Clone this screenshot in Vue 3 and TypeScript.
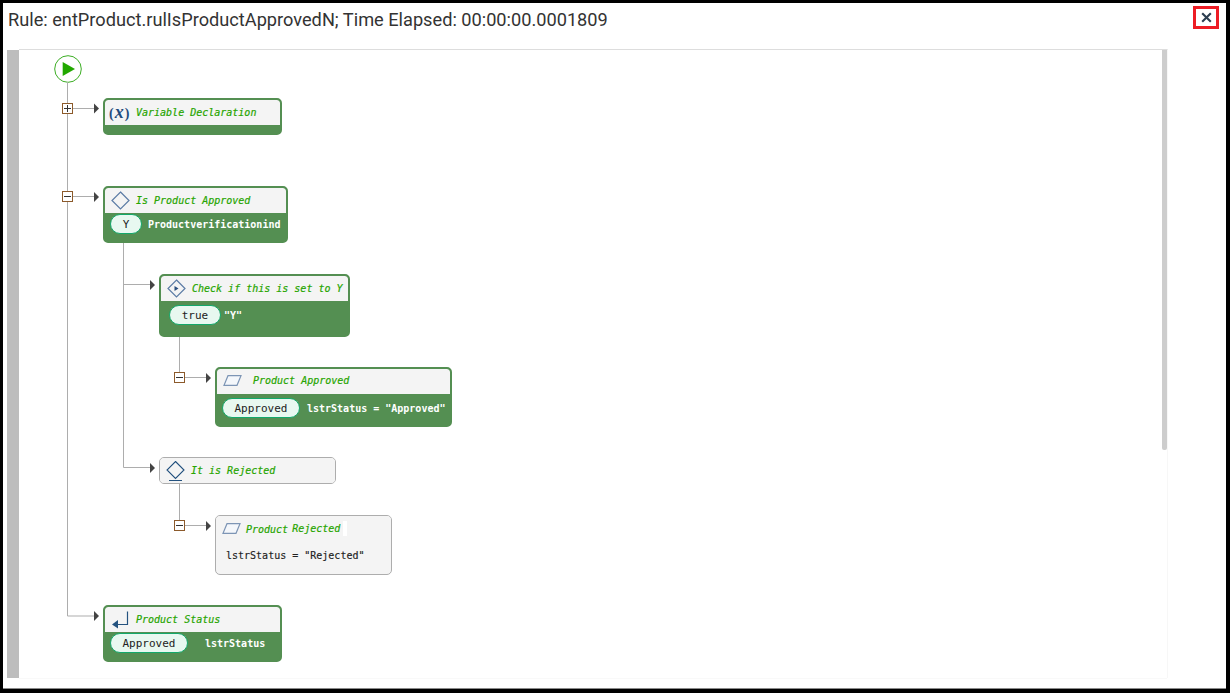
<script setup lang="ts">
type IconKind = 'variable' | 'diamond' | 'check' | 'assign' | 'rejected' | 'assignLight' | 'return'

interface FlowNode {
    id: string
    x: number
    y: number
    width: number
    height: number
    titleGap: number
    icon: IconKind
    title: string
    titleTail?: string
    titleLift?: number
    idle?: boolean
    pill?: string
    pillWidth?: number
    bodyLeft?: number
    bodyTop?: number
    bodyGap?: number
    expression?: string
}

// page coordinates of the diagram canvas
const originX = 19
const originY = 50

const nodes: FlowNode[] = [
    { id: 'vars', x: 103, y: 98, width: 179, height: 37, titleGap: 5, icon: 'variable', title: 'Variable Declaration' },
    { id: 'approved', x: 103, y: 186, width: 185, height: 57, titleGap: 6, icon: 'diamond', title: 'Is Product Approved', pill: 'Y', pillWidth: 32, bodyLeft: 5, bodyTop: 1, bodyGap: 6, expression: 'Productverificationind' },
    { id: 'check', x: 159, y: 274, width: 191, height: 63, titleGap: 6, icon: 'check', title: 'Check if this is set to Y', pill: 'true', pillWidth: 52, bodyLeft: 8, bodyTop: 4, bodyGap: 3, expression: '"Y"' },
    { id: 'assign', x: 215, y: 367, width: 237, height: 60, titleGap: 11, titleLift: 2, icon: 'assign', title: 'Product Approved', pill: 'Approved', pillWidth: 78, bodyLeft: 5, bodyTop: 4, bodyGap: 7, expression: 'lstrStatus = "Approved"' },
    { id: 'rejected', x: 159, y: 457, width: 177, height: 27, titleGap: 6, icon: 'rejected', title: 'It is Rejected', idle: true },
    { id: 'assignRejected', x: 215, y: 515, width: 177, height: 60, titleGap: 5, icon: 'assignLight', title: 'Product', titleTail: 'Rejected', idle: true, bodyLeft: 10, bodyTop: 4, expression: 'lstrStatus = "Rejected"' },
    { id: 'status', x: 103, y: 605, width: 179, height: 57, titleGap: 7, icon: 'return', title: 'Product Status', pill: 'Approved', pillWidth: 78, bodyLeft: 5, bodyTop: 1, bodyGap: 17, expression: 'lstrStatus' }
]

const lines = [
    'M67.5 82V616H94',
    'M73 108.5H94',
    'M73 196.5H94',
    'M123.5 243V467.5H150',
    'M123.5 284.5H150',
    'M179.5 337V377.5H206',
    'M179.5 484V525.5H206'
]

const arrows = [
    [94, 108.5],
    [94, 197],
    [150, 285],
    [206, 378],
    [150, 468],
    [206, 526],
    [94, 616]
]

const toggles = [
    { x: 62, y: 103, open: false },
    { x: 62, y: 191, open: true },
    { x: 174, y: 372, open: true },
    { x: 174, y: 520, open: true }
]

function nodeStyle(node: FlowNode) {
    return {
        left: `${node.x - originX}px`,
        top: `${node.y - originY}px`,
        width: `${node.width}px`,
        height: `${node.height}px`
    }
}
</script>

<template>
    <div class="dialog">
        <div class="dialog-head">
            <span class="dialog-title">Rule: entProduct.rulIsProductApprovedN; Time Elapsed: 00:00:00.0001809</span>
            <button class="close-btn" type="button" aria-label="Close">
                <svg width="11" height="11" viewBox="0 0 11 11">
                    <path d="M1.2 1.2 9.8 9.8M9.8 1.2 1.2 9.8" stroke="#2c3e50" stroke-width="2.1" fill="none" />
                </svg>
            </button>
        </div>

        <div class="viewer">
            <div class="gutter"></div>
            <div class="canvas">
                <svg class="wires" width="1142" height="628" :viewBox="`${originX} ${originY} 1142 628`">
                    <circle cx="68" cy="69" r="13.3" fill="#fff" stroke="#3cae24" stroke-width="1" />
                    <path d="M62.7 62 75 69 62.7 76Z" fill="#22a800" />
                    <path v-for="line in lines" :key="line" :d="line" fill="none" stroke="#adadad" stroke-width="1" />
                    <path
                        v-for="arrow in arrows"
                        :key="arrow.join()"
                        :d="`M${arrow[0]} ${arrow[1] - 5}L${arrow[0] + 5} ${arrow[1]}L${arrow[0]} ${arrow[1] + 5}Z`"
                        fill="#444"
                    />
                    <g v-for="toggle in toggles" :key="toggle.y">
                        <rect :x="toggle.x + 0.5" :y="toggle.y + 0.5" width="10" height="10" fill="#fff" stroke="#8c5a2b" />
                        <path :d="`M${toggle.x + 2} ${toggle.y + 5.5}H${toggle.x + 9}`" stroke="#333" />
                        <path v-if="!toggle.open" :d="`M${toggle.x + 5.5} ${toggle.y + 2}V${toggle.y + 9}`" stroke="#333" />
                    </g>
                </svg>

                <div
                    v-for="node in nodes"
                    :key="node.id"
                    :class="['node', { idle: node.idle }]"
                    :style="nodeStyle(node)"
                >
                    <div class="node-head" :style="{ paddingBottom: node.titleLift ? `${node.titleLift}px` : undefined }">
                        <span v-if="node.icon === 'variable'" class="var-icon">(<i>x</i>)</span>
                        <svg v-else-if="node.icon === 'diamond'" class="icon" width="19" height="19" viewBox="0 0 19 19">
                            <path d="M9.5 1 18 9.5 9.5 18 1 9.5Z" fill="none" stroke="#5b7ba5" stroke-width="1.2" />
                        </svg>
                        <svg v-else-if="node.icon === 'check'" class="icon" width="19" height="19" viewBox="0 0 19 19">
                            <path d="M9.5 1 18 9.5 9.5 18 1 9.5Z" fill="none" stroke="#5b7ba5" stroke-width="1.2" />
                            <path d="M7.5 7 11.5 9.5 7.5 12Z" fill="#2b4f7f" />
                        </svg>
                        <svg v-else-if="node.icon === 'rejected'" class="icon" width="19" height="20" viewBox="0 0 19 20">
                            <path d="M9.5 .5 18 9 9.5 17.5 1 9Z" fill="none" stroke="#24527f" stroke-width="1.1" />
                            <path d="M3 19.5H16" stroke="#24527f" stroke-width="1" />
                        </svg>
                        <svg v-else-if="node.icon === 'return'" class="icon" width="18" height="18" viewBox="0 0 18 18">
                            <path d="M16.5 .5V13.5H6" fill="none" stroke="#24527f" stroke-width="1.2" />
                            <path d="M1 13.5 7 9V17.5Z" fill="#24527f" />
                        </svg>
                        <svg v-else class="icon" width="19" height="11" viewBox="0 0 19 11">
                            <path d="M5 .7H18L14 10.3H1Z" fill="#f4f7fb" stroke="#7d95b5" stroke-width="1.2" />
                        </svg>
                        <span
                            :class="['node-title', { dropped: node.titleTail }]"
                            :style="{ marginLeft: `${node.titleGap}px` }"
                        >{{ node.title }}</span>
                        <template v-if="node.titleTail">
                            <span class="node-title tail">{{ node.titleTail }}</span>
                            <span class="title-patch"></span>
                        </template>
                    </div>
                    <div
                        class="node-body"
                        :style="{
                            paddingLeft: node.bodyLeft ? `${node.bodyLeft}px` : undefined,
                            paddingTop: node.bodyTop ? `${node.bodyTop}px` : undefined
                        }"
                    >
                        <span v-if="node.pill" class="pill" :style="{ width: `${node.pillWidth}px` }">{{ node.pill }}</span>
                        <span
                            v-if="node.expression"
                            class="expression"
                            :style="{ marginLeft: node.bodyGap ? `${node.bodyGap}px` : undefined }"
                        >{{ node.expression }}</span>
                    </div>
                </div>
            </div>
            <div class="scroll-track">
                <div class="scroll-thumb"></div>
            </div>
        </div>
        <div class="viewer-foot"></div>
    </div>
</template>

<style>
html,
body {
    margin: 0;
    overflow: hidden;
    background: #000;
}
</style>

<style scoped>
.dialog {
    box-sizing: border-box;
    width: 1230px;
    height: 693px;
    display: flex;
    flex-direction: column;
    background: #fff;
    border: solid #000;
    border-width: 3px 4px 4px 3px;
    box-shadow: inset 0 -1px #8a8a8a;
    font-family: Roboto, "Liberation Sans", sans-serif;
}

.dialog-head {
    display: flex;
    align-items: flex-start;
    justify-content: space-between;
    height: 46px;
    padding: 3px 7px 0 5px;
    box-sizing: border-box;
    flex: none;
}

.dialog-title {
    font-size: 18.2px;
    line-height: 28px;
    color: #333;
}

.close-btn {
    display: flex;
    align-items: center;
    justify-content: center;
    box-sizing: border-box;
    width: 26px;
    height: 23px;
    padding: 0;
    background: #fff;
    border: 3px solid #ed1c24;
}

.viewer {
    display: flex;
    flex: none;
    height: 629px;
    margin-left: 4px;
    width: 1161px;
}

.gutter {
    flex: none;
    width: 12px;
    margin-top: 1px;
    background: #bdbdbd;
}

.canvas {
    position: relative;
    flex: 1;
    overflow: hidden;
    border-top: 1px solid #ddd;
}

.wires {
    position: absolute;
    left: 0;
    top: 0;
}

.scroll-track {
    flex: none;
    width: 6px;
    border-top: 1px solid #ddd;
    border-right: 1px solid #f7f7f7;
}

.scroll-thumb {
    width: 5px;
    height: 400px;
    margin-left: 1px;
    border-radius: 0 0 2px 2px;
    background: #cdcdcd;
}

.viewer-foot {
    width: 1148px;
    margin-left: 16px;
    border-top: 1px solid #f9f9f9;
}

.node {
    position: absolute;
    box-sizing: border-box;
    display: flex;
    flex-direction: column;
    overflow: hidden;
    background: #548f52;
    border: 2px solid #548f52;
    border-radius: 5px;
    font-family: "DejaVu Sans Mono", "Liberation Mono", monospace;
    font-size: 10px;
}

.node.idle {
    background: #f4f4f4;
    border: 1px solid #adadad;
}

.node-head {
    display: flex;
    align-items: center;
    flex: none;
    box-sizing: border-box;
    height: 25px;
    padding-left: 6px;
    background: #f4f4f4;
    border-radius: 3px 3px 0 0;
}

.icon {
    flex: none;
}

.var-icon {
    flex: none;
    width: 22px;
    margin-left: -2px;
    font-family: "Liberation Serif", serif;
    font-size: 14px;
    font-weight: bold;
    line-height: 20px;
    white-space: nowrap;
    color: #1f4a7c;
}

.var-icon i {
    font-size: 18px;
    margin: 0 1px;
}

.node-title {
    font-style: italic;
    color: #27a500;
    white-space: nowrap;
    -webkit-text-stroke: 0.2px #27a500;
}

.node-title.dropped {
    transform: translateY(1px);
}

.node-title.tail {
    margin-left: 4px;
}

.title-patch {
    flex: none;
    width: 4px;
    height: 15px;
    margin-left: 3px;
    background: #fff;
}

.node-body {
    flex: 1;
    display: flex;
    align-items: flex-start;
    min-height: 0;
}

.pill {
    box-sizing: border-box;
    flex: none;
    height: 20px;
    line-height: 20px;
    text-align: center;
    color: #222;
    background: #e8f8f0;
    border: 1px solid #13a86b;
    border-radius: 10px;
    font-size: 11px;
}

.expression {
    line-height: 22px;
    color: #fff;
    font-weight: bold;
    white-space: nowrap;
}

.idle .expression {
    color: #222;
    font-weight: normal;
    -webkit-text-stroke: 0.15px #222;
}
</style>
